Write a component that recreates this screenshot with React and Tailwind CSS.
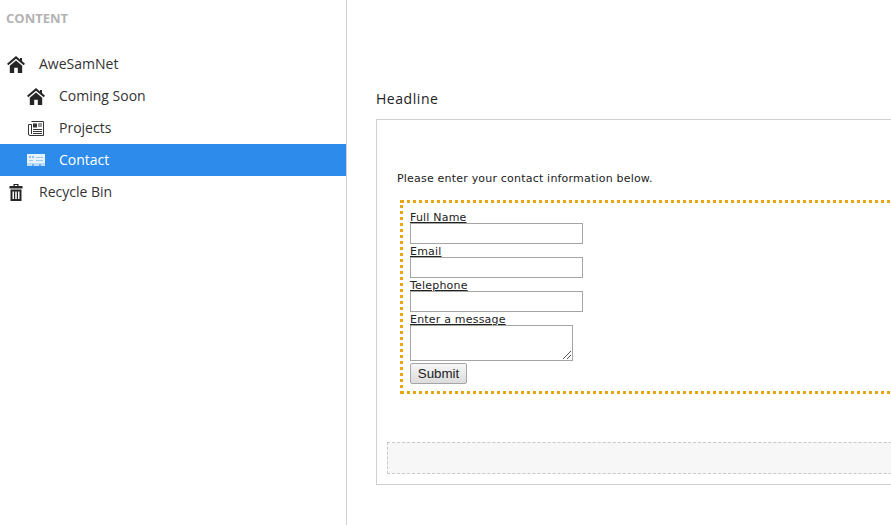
const HomeIcon = () => (
  <svg width="18" height="17" viewBox="0 0 18 17" className="shrink-0">
    <path d="M9 0 L13 3.4 V2 H15 V5.1 L18 7.7 L16.7 9.2 L9 2.7 L1.3 9.2 L0 7.7 Z" fill="#262626" />
    <path d="M9 4.6 L15.2 9.8 V17 H10.8 V11.8 H7.2 V17 H2.8 V9.8 Z" fill="#262626" />
  </svg>
);

const ProjectsIcon = () => (
  <svg width="16" height="15" viewBox="0 0 16 15" fill="none" stroke="#333" className="shrink-0">
    <path d="M3.5 0.5 H15.5 V14.5 H2 Q0.5 14.5 0.5 13 V3.5 H3.5 V13" />
    <rect x="5" y="2.5" width="4" height="4" fill="#333" stroke="none" />
    <path d="M10 3 H14 M10 5 H14 M5 8.5 H14 M5 10.5 H14 M5 12.5 H14" />
  </svg>
);

const ContactIcon = () => (
  <svg width="18" height="12" viewBox="0 0 18 12" className="shrink-0">
    <rect x="0" y="0" width="18" height="12" fill="#e6f2fd" />
    <rect x="0" y="9" width="18" height="3" fill="#bcdcf9" />
    <rect x="2" y="2" width="2" height="2" fill="#8cc0f2" />
    <rect x="5" y="2" width="2" height="2" fill="#8cc0f2" />
    <rect x="9" y="3" width="7" height="1" fill="#9ac9f4" />
    <rect x="9" y="6" width="7" height="1" fill="#9ac9f4" />
    <rect x="2" y="6" width="4" height="1" fill="#9ac9f4" />
    <rect x="5" y="10" width="2" height="2" fill="#6fb0ee" />
    <rect x="12" y="10" width="2" height="2" fill="#6fb0ee" />
  </svg>
);

const TrashIcon = () => (
  <svg width="14" height="17" viewBox="0 0 14 17" className="shrink-0">
    <path d="M4.5 0 H9.5 V2 H13.5 V4.5 H0.5 V2 H4.5 Z M5.8 1 V2 H8.2 V1 Z" fill="#262626" fillRule="evenodd" />
    <path d="M1.5 5.5 H12.5 V17 H1.5 Z M3.5 7.5 V15 H5 V7.5 Z M6.2 7.5 V15 H7.8 V7.5 Z M9 7.5 V15 H10.5 V7.5 Z" fill="#262626" fillRule="evenodd" />
  </svg>
);

function NavRow({ icon, label, iconBox, active }) {
  return (
    <div className={`flex items-center h-8 text-sm ${active ? 'bg-[#2d8ceb] text-white' : 'text-[#333]'}`}>
      <div className={`flex ${iconBox}`}>{icon}</div>
      <span>{label}</span>
    </div>
  );
}

function Field({ label }) {
  return (
    <>
      <div className="h-[13px] leading-[15px]"><span className="underline">{label}</span></div>
      <div className="w-[173px] h-[21px] border border-[#a5a5a5] bg-white" />
    </>
  );
}

export default function App() {
  return (
    <div className="flex w-[891px] h-[525px] overflow-hidden bg-white font-['Open_Sans',sans-serif]">
      <aside className="w-[347px] shrink-0 border-r border-[#d0d0d0]">
        <div className="h-[48px] pl-[6px] pt-[10px] text-[13px] leading-[17px] font-bold text-[#b3b3b3]">CONTENT</div>
        <NavRow icon={<HomeIcon />} label="AweSamNet" iconBox="w-[39px] pl-[7px]" />
        <NavRow icon={<HomeIcon />} label="Coming Soon" iconBox="w-[59px] pl-[27px]" />
        <NavRow icon={<ProjectsIcon />} label="Projects" iconBox="w-[59px] pl-[28px]" />
        <NavRow icon={<ContactIcon />} label="Contact" iconBox="w-[59px] pl-[27px]" active />
        <NavRow icon={<TrashIcon />} label="Recycle Bin" iconBox="w-[39px] pl-[9px]" />
      </aside>

      <main className="flex-1 min-w-0 pl-[29px]">
        <h2 className="pt-[89px] h-[119px] text-sm font-normal leading-[20px] text-[#222] tracking-[0.55px]">Headline</h2>
        <div className="w-[600px] h-[366px] border border-[#d0d0d0] pt-[50px] pl-[20px] font-['DejaVu_Sans',sans-serif] text-[11px] tracking-[0.2px] text-[#222]">
          <p className="h-[30px] leading-[18px]">Please enter your contact information below.</p>
          <div className="ml-[3px] w-[600px] h-[194px] border-[3px] border-dotted border-[#e8a612] pl-[7px] pt-[7px]">
            <Field label="Full Name" />
            <Field label="Email" />
            <Field label="Telephone" />
            <div className="h-[13px] leading-[15px]"><span className="underline">Enter a message</span></div>
            <div className="relative w-[163px] h-[36px] border border-[#a5a5a5]">
              <svg width="10" height="10" viewBox="0 0 10 10" className="absolute right-0 bottom-0" stroke="#555" fill="none">
                <path d="M1 9 L9 1 M5 9 L9 5" />
              </svg>
            </div>
            <button className="block mt-[2px] w-[57px] h-[21px] rounded-[2px] border border-[#a5a5a5] bg-gradient-to-b from-[#f6f6f6] to-[#dcdcdc] font-['Liberation_Sans',sans-serif] text-[13.33px] tracking-normal leading-none text-[#222]">Submit</button>
          </div>
          <div className="-ml-[10px] mt-[48px] h-[32px] w-[600px] border border-dashed border-[#c8c8c8] bg-[#f7f7f7]" />
        </div>
      </main>
    </div>
  );
}
